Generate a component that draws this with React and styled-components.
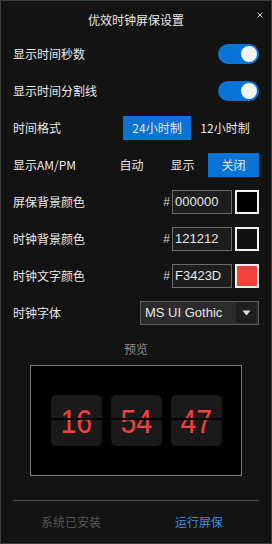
import React from "react";
import styled, { createGlobalStyle } from "styled-components";

const GlobalStyle = createGlobalStyle`
  html, body { margin: 0; padding: 0; background: #131313; }
  * { box-sizing: border-box; }
`;

const Window = styled.div`
  width: 272px;
  height: 544px;
  border: 1px solid #3d3d3d;
  background: #131313;
  display: flex;
  flex-direction: column;
  font-family: "Noto Sans CJK SC", "Liberation Sans", sans-serif;
  font-size: 12px;
  color: #e6e6e6;
`;

const TitleBar = styled.div`
  position: relative;
  height: 34px;
  padding-top: 11px;
  display: flex;
  justify-content: center;
  line-height: 16px;
  color: #e8e8e8;
`;

const Close = styled.svg`
  position: absolute;
  top: 10px;
  right: 7px;
  width: 8px;
  height: 8px;
`;

const Content = styled.div`
  padding: 0 12px;
  display: flex;
  flex-direction: column;
`;

const Row = styled.div`
  height: 37px;
  display: flex;
  align-items: center;
  justify-content: space-between;
`;

const Label = styled.span`
  line-height: 16px;
  color: #e8e8e8;
`;

const Toggle = styled.div`
  width: 41px;
  height: 20px;
  border-radius: 10px;
  background: #0a74d6;
  display: flex;
  align-items: center;
  justify-content: ${(p) => (p.$on ? "flex-end" : "flex-start")};
  padding: 0 2px;
`;

const Knob = styled.div`
  width: 16px;
  height: 16px;
  border-radius: 50%;
  background: #f3f3f3;
`;

const Segments = styled.div`
  display: flex;
`;

const SegButton = styled.div`
  width: ${(p) => p.$w}px;
  height: 24px;
  display: flex;
  align-items: center;
  justify-content: center;
  background: ${(p) => (p.$active ? "#0a74d6" : "transparent")};
  color: #e6e6e6;
  line-height: 16px;
`;

const ColorControls = styled.div`
  display: flex;
  align-items: center;
`;

const Hash = styled.span`
  font-family: "Liberation Sans", sans-serif;
  font-size: 12px;
  color: #d0d0d0;
  margin-right: 2px;
`;

const HexBox = styled.div`
  width: 60px;
  height: 24px;
  border: 1px solid #6a6a6a;
  background: #1d1d1d;
  padding: 0 2px;
  display: flex;
  align-items: center;
  font-family: "Liberation Sans", sans-serif;
  font-size: 13px;
  color: #e6e6e6;
`;

const Swatch = styled.div`
  width: 24px;
  height: 24px;
  margin-left: 3px;
  border: 2px solid #f2f2f2;
  background: ${(p) => p.$color};
`;

const Select = styled.div`
  width: 119px;
  height: 24px;
  border: 1px solid #5a5a5a;
  background: #2b2b2b;
  display: flex;
  align-items: center;
  justify-content: space-between;
  padding: 1px 2px 1px 4px;
`;

const SelectText = styled.span`
  font-family: "Liberation Sans", sans-serif;
  font-size: 13px;
  color: #e6e6e6;
`;

const Arrow = styled.div`
  width: 20px;
  height: 20px;
  background: #1f1f1f;
  display: flex;
  align-items: center;
  justify-content: center;
`;

const PreviewLabel = styled.div`
  height: 34px;
  display: flex;
  align-items: center;
  justify-content: center;
  color: #8c8c8c;
`;

const PreviewBox = styled.div`
  align-self: center;
  width: 212px;
  height: 111px;
  border: 1px solid #7a7a7a;
  background: #000;
  display: flex;
  align-items: center;
  justify-content: center;
  gap: 9px;
`;

const DigitCard = styled.div`
  position: relative;
  width: 51px;
  height: 51px;
  border-radius: 5px;
  background: #1a1a1a;
  display: flex;
  align-items: center;
  justify-content: center;
  padding-top: 2px;
  &::after {
    content: "";
    position: absolute;
    left: 0;
    right: 0;
    top: 23px;
    height: 2px;
    background: #000;
  }
`;

const DigitText = styled.span`
  display: inline-block;
  color: #f3423d;
  font-family: "Liberation Sans", sans-serif;
  font-size: 33px;
  line-height: 1;
  transform: scaleX(0.86);
`;

const Separator = styled.div`
  margin-top: 24px;
  height: 1px;
  background: #505050;
`;

const Footer = styled.div`
  height: 42px;
  padding: 0 8px 0 6px;
  display: grid;
  grid-template-columns: 1fr 1fr;
  align-items: center;
  justify-items: center;
`;

const FooterButton = styled.span`
  line-height: 16px;
  color: ${(p) => (p.$primary ? "#3590e6" : "#555555")};
`;

export default function App() {
  return (
    <>
      <GlobalStyle />
      <Window>
        <TitleBar>
          优效时钟屏保设置
          <Close viewBox="0 0 8 8">
            <path d="M1.5 1.5 L6.5 6.5 M6.5 1.5 L1.5 6.5" stroke="#d8d8d8" strokeWidth="1" />
          </Close>
        </TitleBar>
        <Content>
          <Row>
            <Label>显示时间秒数</Label>
            <Toggle $on>
              <Knob />
            </Toggle>
          </Row>
          <Row>
            <Label>显示时间分割线</Label>
            <Toggle $on>
              <Knob />
            </Toggle>
          </Row>
          <Row>
            <Label>时间格式</Label>
            <Segments>
              <SegButton $w={68} $active>24小时制</SegButton>
              <SegButton $w={68}>12小时制</SegButton>
            </Segments>
          </Row>
          <Row>
            <Label>显示AM/PM</Label>
            <Segments>
              <SegButton $w={51}>自动</SegButton>
              <SegButton $w={51}>显示</SegButton>
              <SegButton $w={51} $active>关闭</SegButton>
            </Segments>
          </Row>
          <Row>
            <Label>屏保背景颜色</Label>
            <ColorControls>
              <Hash>#</Hash>
              <HexBox>000000</HexBox>
              <Swatch $color="#000000" />
            </ColorControls>
          </Row>
          <Row>
            <Label>时钟背景颜色</Label>
            <ColorControls>
              <Hash>#</Hash>
              <HexBox>121212</HexBox>
              <Swatch $color="#121212" />
            </ColorControls>
          </Row>
          <Row>
            <Label>时钟文字颜色</Label>
            <ColorControls>
              <Hash>#</Hash>
              <HexBox>F3423D</HexBox>
              <Swatch $color="#F3423D" />
            </ColorControls>
          </Row>
          <Row>
            <Label>时钟字体</Label>
            <Select>
              <SelectText>MS UI Gothic</SelectText>
              <Arrow>
                <svg width="9" height="6" viewBox="0 0 9 6">
                  <path d="M0.5 0.5 L8.5 0.5 L4.5 5.5 Z" fill="#e0e0e0" />
                </svg>
              </Arrow>
            </Select>
          </Row>
          <PreviewLabel>预览</PreviewLabel>
          <PreviewBox>
            <DigitCard><DigitText>16</DigitText></DigitCard>
            <DigitCard><DigitText>54</DigitText></DigitCard>
            <DigitCard><DigitText>47</DigitText></DigitCard>
          </PreviewBox>
          <Separator />
        </Content>
        <Footer>
          <FooterButton>系统已安装</FooterButton>
          <FooterButton $primary>运行屏保</FooterButton>
        </Footer>
      </Window>
    </>
  );
}
